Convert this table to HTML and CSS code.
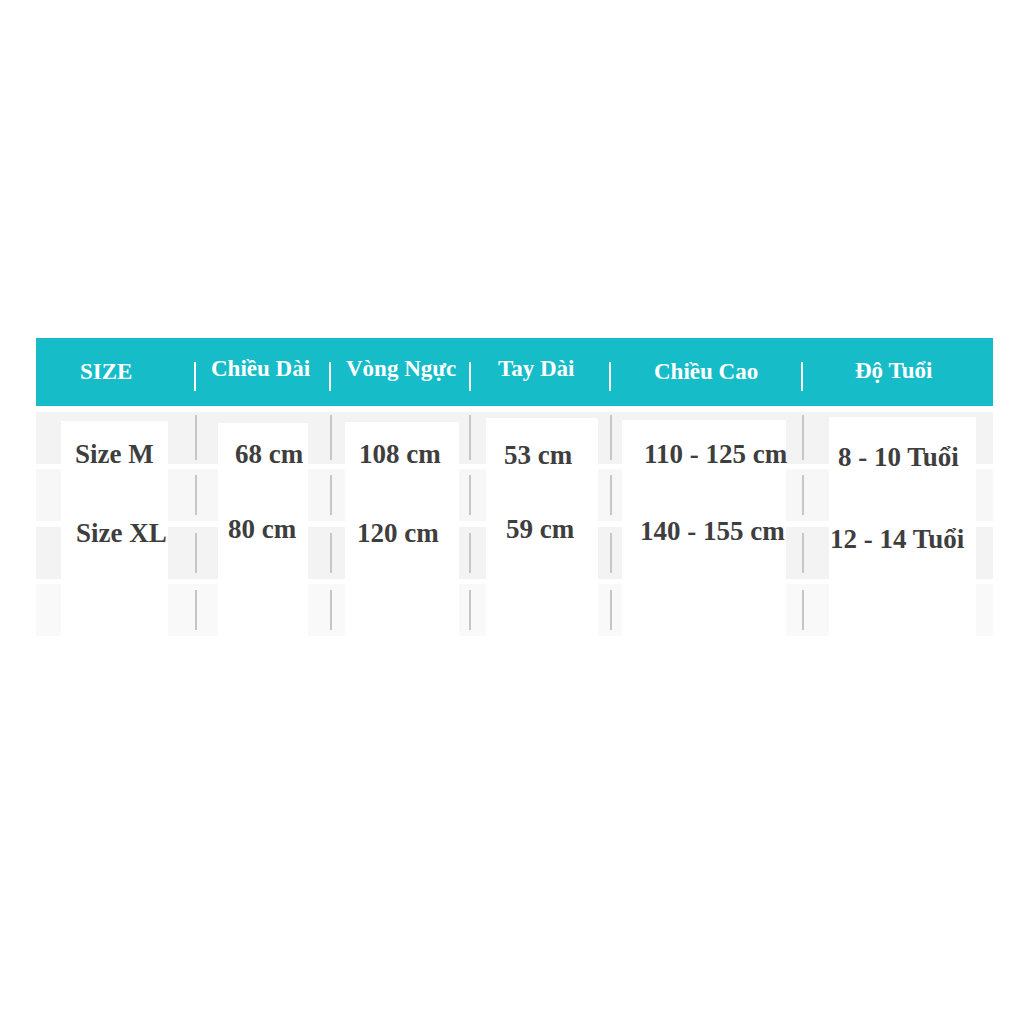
FILE: index.html
```html
<!DOCTYPE html>
<html lang="vi">
<head>
<meta charset="utf-8">
<title>Bảng size</title>
<link rel="stylesheet" href="styles.css">
</head>
<body>
<div class="chart">
  <div class="head">
    <div class="hc h1">SIZE</div>
    <span class="hdiv"></span>
    <div class="hc h2">Chiều Dài</div>
    <span class="hdiv"></span>
    <div class="hc h3">Vòng Ngực</div>
    <span class="hdiv"></span>
    <div class="hc h4">Tay Dài</div>
    <span class="hdiv"></span>
    <div class="hc h5">Chiều Cao</div>
    <span class="hdiv"></span>
    <div class="hc h6">Độ Tuổi</div>
  </div>
  <div class="body">
    <div class="edge-l"></div>
    <div class="col c1"><div class="v a">Size M</div><div class="v b">Size XL</div></div>
    <div class="sep s1"><i></i><i></i><i></i><i></i></div>
    <div class="col c2"><div class="v a">68 cm</div><div class="v b">80 cm</div></div>
    <div class="sep s2"><i></i><i></i><i></i><i></i></div>
    <div class="col c3"><div class="v a">108 cm</div><div class="v b">120 cm</div></div>
    <div class="sep s3"><i></i><i></i><i></i><i></i></div>
    <div class="col c4"><div class="v a">53 cm</div><div class="v b">59 cm</div></div>
    <div class="sep s4"><i></i><i></i><i></i><i></i></div>
    <div class="col c5"><div class="v a">110 - 125 cm</div><div class="v b">140 - 155 cm</div></div>
    <div class="sep s5"><i></i><i></i><i></i><i></i></div>
    <div class="col c6"><div class="v a">8 - 10 Tuổi</div><div class="v b">12 - 14 Tuổi</div></div>
    <div class="edge-r"></div>
  </div>
</div>
</body>
</html>
```

FILE: styles.css
```css
html, body {
  margin: 0;
  padding: 0;
  background: #ffffff;
}
body {
  width: 1024px;
  height: 1024px;
  font-family: "Liberation Serif", "Times New Roman", serif;
  font-weight: bold;
}
.chart {
  padding-top: 338px;
  padding-left: 36px;
  width: 957px;
}

/* header */
.head {
  display: flex;
  align-items: flex-start;
  height: 68px;
  background: #17bcc9;
  color: #ffffff;
  font-size: 23px;
  line-height: 26px;
}
.hc {
  white-space: nowrap;
  box-sizing: border-box;
}
.hdiv {
  width: 2px;
  height: 29px;
  margin-top: 24px;
  background: #ffffff;
  flex: none;
}
.h1 { width: 158px; padding-left: 44px; padding-top: 21px; }
.h2 { width: 133px; padding-left: 15px; padding-top: 18px; }
.h3 { width: 138px; padding-left: 15px; padding-top: 18px; }
.h4 { width: 138px; padding-left: 27px; padding-top: 18px; }
.h5 { width: 190px; padding-left: 43px; padding-top: 21px; }
.h6 { width: 190px; padding-left: 52px; padding-top: 20px; }

/* body */
.body {
  display: flex;
  align-items: stretch;
  height: 230px;
  background: linear-gradient(to bottom,
    #ffffff 0, #ffffff 6px,
    #f3f3f3 6px, #f3f3f3 58px,
    #ffffff 58px, #ffffff 63px,
    #f7f7f7 63px, #f7f7f7 115px,
    #ffffff 115px, #ffffff 121px,
    #f3f3f3 121px, #f3f3f3 173px,
    #ffffff 173px, #ffffff 178px,
    #f9f9f9 178px, #f9f9f9 230px);
  color: #3e3e3e;
  font-size: 27px;
  line-height: 30px;
}
.edge-l { width: 25px; flex: none; }
.edge-r { width: 17px; flex: none; }

.col {
  flex: none;
  background: #ffffff;
  display: flex;
  flex-direction: column;
  align-items: flex-start;
}
.v { white-space: nowrap; }

.c1 { width: 107px; margin-top: 15px; }
.c1 .a { margin-top: 18px; margin-left: 14px; }
.c1 .b { margin-top: 49px; margin-left: 15px; }

.c2 { width: 90px; margin-top: 17px; }
.c2 .a { margin-top: 16px; margin-left: 17px; }
.c2 .b { margin-top: 45px; margin-left: 10px; }

.c3 { width: 114px; margin-top: 16px; }
.c3 .a { margin-top: 17px; margin-left: 14px; }
.c3 .b { margin-top: 49px; margin-left: 12px; }

.c4 { width: 112px; margin-top: 12px; }
.c4 .a { margin-top: 22px; margin-left: 18px; }
.c4 .b { margin-top: 44px; margin-left: 20px; }

.c5 { width: 164px; margin-top: 14px; }
.c5 .a { margin-top: 19px; margin-left: 22px; }
.c5 .b { margin-top: 47px; margin-left: 18px; }

.c6 { width: 147px; margin-top: 11px; }
.c6 .a { margin-top: 25px; margin-left: 9px; }
.c6 .b { margin-top: 52px; margin-left: 1px; }

/* row separators */
.sep {
  flex: none;
  display: flex;
  flex-direction: column;
  box-sizing: border-box;
}
.sep i {
  display: block;
  width: 2px;
  background: #c6c6c6;
}
.sep i:nth-child(1) { margin-top: 9px; height: 45px; }
.sep i:nth-child(2) { margin-top: 15px; height: 40px; }
.sep i:nth-child(3) { margin-top: 18px; height: 40px; }
.sep i:nth-child(4) { margin-top: 17px; height: 40px; }

.s1 { width: 50px; padding-left: 27px; }
.s2 { width: 37px; padding-left: 22px; }
.s3 { width: 27px; padding-left: 10px; }
.s4 { width: 24px; padding-left: 12px; }
.s5 { width: 43px; padding-left: 16px; }
```
